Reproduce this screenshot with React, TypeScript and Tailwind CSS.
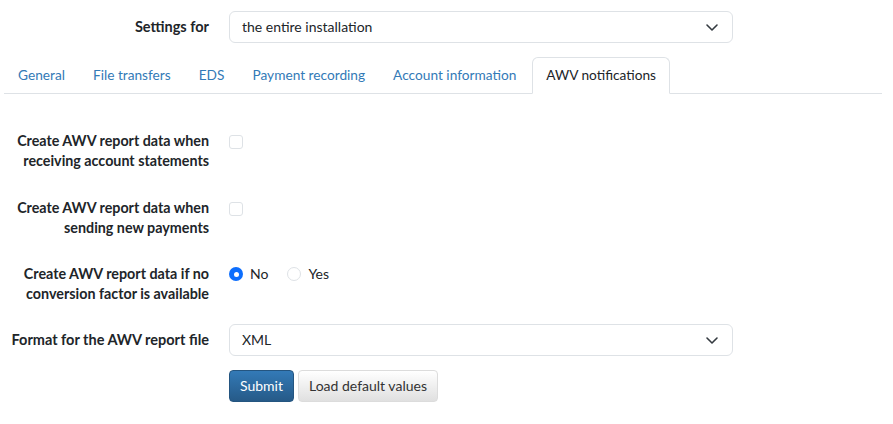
function Chevron() {
  return (
    <svg width="16" height="16" viewBox="0 0 16 16" fill="none">
      <path d="M3 6l5 5 5-5" stroke="#343a40" strokeWidth="1.6" strokeLinecap="round" strokeLinejoin="round" />
    </svg>
  );
}

function Select({ value }: { value: string }) {
  return (
    <div className="flex h-[32px] w-[504px] items-center justify-between rounded-[6px] border border-[#dee2e6] bg-white pl-[12px] pr-[12px]">
      <span>{value}</span>
      <Chevron />
    </div>
  );
}

function Checkbox() {
  return <span className="mt-[4px] block h-[14px] w-[14px] rounded-[3px] border border-[#dee2e6] bg-white" />;
}

function Radio({ checked, label }: { checked?: boolean; label: string }) {
  return (
    <label className="flex items-center gap-[7px]">
      {checked ? (
        <span className="flex h-[14px] w-[14px] items-center justify-center rounded-full bg-[#0d6efd]">
          <span className="h-[5px] w-[5px] rounded-full bg-white" />
        </span>
      ) : (
        <span className="h-[14px] w-[14px] rounded-full border border-[#dee2e6] bg-white" />
      )}
      <span>{label}</span>
    </label>
  );
}

const tabs = ["General", "File transfers", "EDS", "Payment recording", "Account information", "AWV notifications"];

export default function App() {
  return (
    <div className="h-[424px] w-[893px] bg-white px-[4px] pt-[11px] font-['Segoe_UI','Lato',sans-serif] text-[14px] leading-[20px] text-[#212529]">
      <div className="flex items-center gap-[20px]">
        <div className="w-[205px] text-right text-[14.5px] font-bold">Settings for</div>
        <Select value="the entire installation" />
      </div>

      <div className="mt-[14px] flex w-[878px] border-b border-[#dee2e6] text-[13.7px]">
        {tabs.map((t, i) =>
          i === tabs.length - 1 ? (
            <div
              key={t}
              className="-mb-px ml-[2px] rounded-t-[6px] border border-[#dee2e6] border-b-white bg-white px-[13px] py-[7px] text-[#212529]"
            >
              {t}
            </div>
          ) : (
            <div key={t} className="border border-transparent px-[13px] py-[7px] text-[#337ab7]">
              {t}
            </div>
          )
        )}
      </div>

      <div className="mt-[37px] flex gap-[20px]">
        <div className="w-[205px] whitespace-nowrap text-right text-[14.3px] font-bold">
          Create AWV report data when
          <br />
          receiving account statements
        </div>
        <Checkbox />
      </div>

      <div className="mt-[27px] flex gap-[20px]">
        <div className="w-[205px] whitespace-nowrap text-right text-[14.3px] font-bold">
          Create AWV report data when
          <br />
          sending new payments
        </div>
        <Checkbox />
      </div>

      <div className="mt-[26px] flex gap-[20px]">
        <div className="w-[205px] whitespace-nowrap text-right text-[14.3px] font-bold">
          Create AWV report data if no
          <br />
          conversion factor is available
        </div>
        <div className="flex h-[20px] items-center gap-[19px]">
          <Radio checked label="No" />
          <Radio label="Yes" />
        </div>
      </div>

      <div className="mt-[20px] flex items-center gap-[20px]">
        <div className="w-[205px] whitespace-nowrap text-right text-[14.5px] font-bold">Format for the AWV report file</div>
        <Select value="XML" />
      </div>

      <div className="ml-[225px] mt-[14px] flex gap-[4px]">
        <button className="h-[32px] rounded-[4px] border border-[#245580] bg-gradient-to-b from-[#337ab7] to-[#265a88] px-[10px] text-white">
          Submit
        </button>
        <button className="h-[32px] rounded-[4px] border border-[#dcdcdc] bg-gradient-to-b from-white to-[#e0e0e0] px-[10px] text-[#333]">
          Load default values
        </button>
      </div>
    </div>
  );
}
